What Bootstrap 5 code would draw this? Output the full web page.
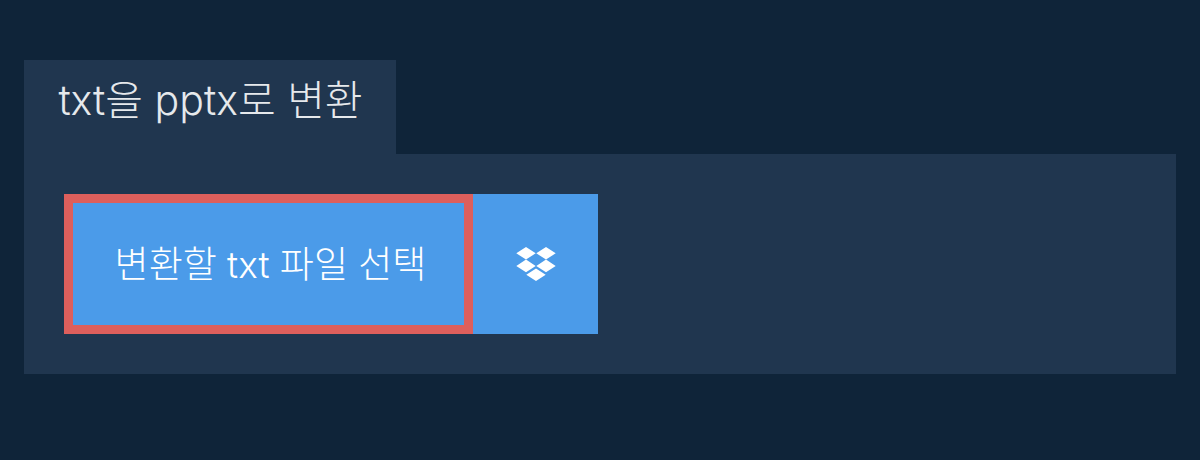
<!DOCTYPE html>
<html lang="ko">
<head>
<meta charset="utf-8">
<link rel="stylesheet" href="https://cdn.jsdelivr.net/npm/bootstrap@5.3.0/dist/css/bootstrap.min.css">
<style>
html,body{height:100%}
body{background:#0f2439;font-family:Inter,"Noto Sans CJK KR","Noto Sans",sans-serif;font-weight:300}
.shell{padding:60px 24px 0}
.tabhead{width:372px;height:94px;background:#20364f;color:#e6e9ec;font-size:41px;line-height:80px;letter-spacing:0;font-weight:300;margin:0;white-space:nowrap;padding-left:1px}
.panelbox{background:#20364f;height:220px;padding:40px}
.pickbtn{width:409px;height:140px;background:#4b9be9;color:#fff;border:9px solid #dd5f5c;border-radius:0;font-size:37px;line-height:1.2;font-weight:300;white-space:nowrap;padding:3px 0 0 4px}
.dropbtn{width:125px;height:140px;background:#4b9be9;border:0;border-radius:0}
.dropbtn svg{width:40px;height:34px;fill:#fff}
</style>
</head>
<body>
<div class="shell">
<h1 class="tabhead text-center">txt을 pptx로 변환</h1>
<div class="panelbox d-flex">
<button class="btn pickbtn d-flex align-items-center justify-content-center">변환할 txt 파일 선택</button>
<button class="btn dropbtn d-flex align-items-center justify-content-center p-0" aria-label="Dropbox"><svg viewBox="0 0 40 34"><path d="M10 0 .3 6.300 10 12.600l9.700-6.300zM30 0l-9.700 6.300L30 12.600l9.700-6.300zM10 12.600.3 18.900 10 25.200l9.700-6.300zM30 12.600l-9.700 6.300L30 25.200l9.700-6.300zM20 21.400l-9.700 6.300L20 34l9.700-6.300z"/></svg></button>
</div>
</div>
<script src="https://cdn.jsdelivr.net/npm/bootstrap@5.3.0/dist/js/bootstrap.bundle.min.js"></script>
</body>
</html>
